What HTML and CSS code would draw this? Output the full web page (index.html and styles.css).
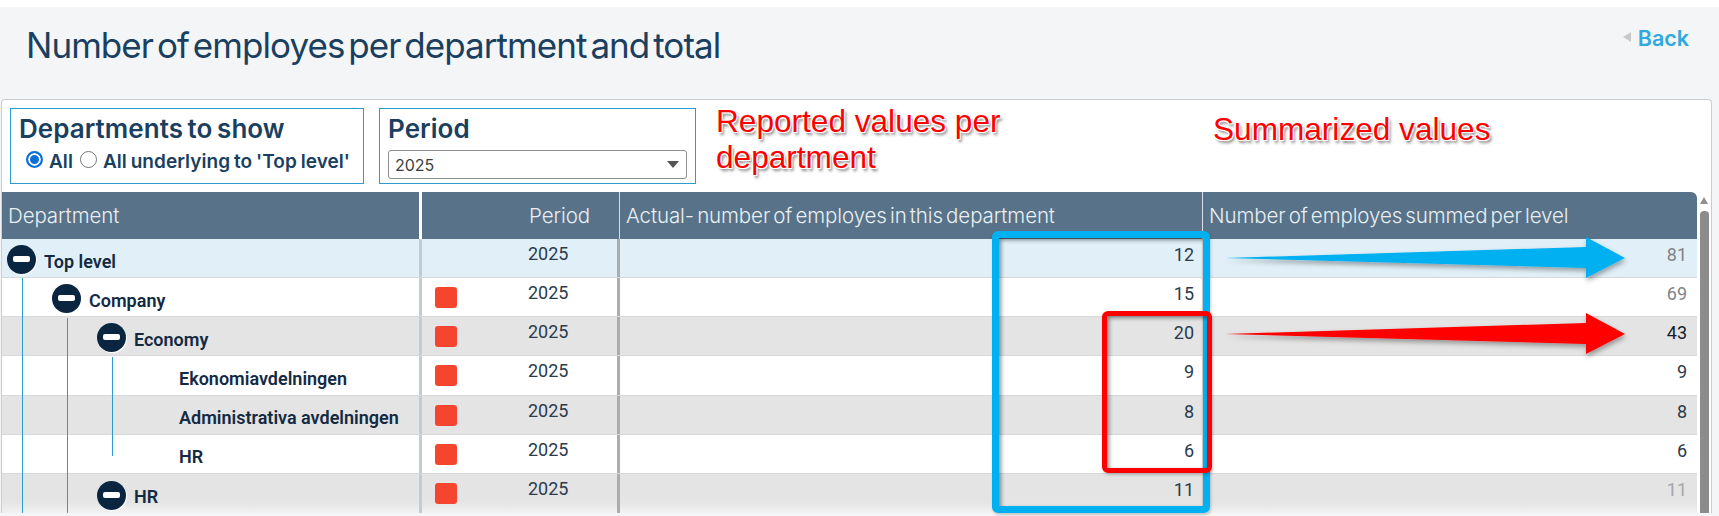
FILE: index.html
```html
<!DOCTYPE html>
<html lang="en">
<head>
<meta charset="utf-8">
<title>Number of employes per department and total</title>
<link rel="stylesheet" href="styles.css">
</head>
<body>
<div class="page">
  <header class="topbar">
    <h1 class="title">Number of employes per department and total</h1>
    <a class="back"><span class="back-arrow"></span>Back</a>
  </header>
  <main class="panel">
    <div class="filters">
      <section class="filter filter-dept">
        <h2 class="filter-title">Departments to show</h2>
        <div class="radios">
          <span class="radio radio-on"></span><span class="radio-label">All</span>
          <span class="radio"></span><span class="radio-label">All underlying to 'Top level'</span>
        </div>
      </section>
      <section class="filter filter-period">
        <h2 class="filter-title">Period</h2>
        <div class="select"><span>2025</span><span class="select-arrow"></span></div>
      </section>
    </div>
    <div class="table-wrap">
      <div class="table">
        <div class="row head">
          <div class="c c1">Department</div>
          <div class="c c2 head-period">Period</div>
          <div class="c c3">Actual- number of employes in this department</div>
          <div class="c c4">Number of employes summed per level</div>
        </div>
        <div class="row selected">
          <div class="c c1 l0"><span class="toggle"></span><span class="name">Top level</span></div>
          <div class="c c2"><span class="year">2025</span></div>
          <div class="c c3 num">12</div>
          <div class="c c4 num muted">81</div>
        </div>
        <div class="row">
          <div class="c c1 l1"><span class="toggle"></span><span class="name">Company</span></div>
          <div class="c c2"><span class="flag"></span><span class="year">2025</span></div>
          <div class="c c3 num">15</div>
          <div class="c c4 num muted">69</div>
        </div>
        <div class="row alt">
          <div class="c c1 l2"><span class="toggle"></span><span class="name">Economy</span></div>
          <div class="c c2"><span class="flag"></span><span class="year">2025</span></div>
          <div class="c c3 num">20</div>
          <div class="c c4 num strong">43</div>
        </div>
        <div class="row">
          <div class="c c1 l3"><span class="name">Ekonomiavdelningen</span></div>
          <div class="c c2"><span class="flag"></span><span class="year">2025</span></div>
          <div class="c c3 num">9</div>
          <div class="c c4 num">9</div>
        </div>
        <div class="row alt">
          <div class="c c1 l3"><span class="name">Administrativa avdelningen</span></div>
          <div class="c c2"><span class="flag"></span><span class="year">2025</span></div>
          <div class="c c3 num">8</div>
          <div class="c c4 num">8</div>
        </div>
        <div class="row">
          <div class="c c1 l3"><span class="name">HR</span></div>
          <div class="c c2"><span class="flag"></span><span class="year">2025</span></div>
          <div class="c c3 num">6</div>
          <div class="c c4 num">6</div>
        </div>
        <div class="row alt last">
          <div class="c c1 l2"><span class="toggle"></span><span class="name">HR</span></div>
          <div class="c c2"><span class="flag"></span><span class="year">2025</span></div>
          <div class="c c3 num">11</div>
          <div class="c c4 num faint">11</div>
        </div>
        <span class="guide g0"></span>
        <span class="guide g1"></span>
        <span class="guide g2"></span>
      </div>
      <div class="scrollbar"><span class="scroll-up"></span><span class="scroll-thumb"></span></div>
    </div>
  </main>

  <div class="note note-reported">Reported values per<br>department</div>
  <div class="note note-summed">Summarized values</div>
  <div class="box box-blue"></div>
  <div class="box box-red"></div>
  <svg class="arrows" width="1719" height="516" viewBox="0 0 1719 516" aria-hidden="true">
    <defs>
      <filter id="sh" x="-5%" y="-30%" width="110%" height="170%">
        <feDropShadow dx="1" dy="3" stdDeviation="2.5" flood-color="#000" flood-opacity=".35"/>
      </filter>
    </defs>
    <path class="arrow-blue" filter="url(#sh)" d="M1225 258 L1586 247 L1586 237 L1625 258 L1586 278 L1586 268 Z"/>
    <path class="arrow-red" filter="url(#sh)" d="M1225 334 L1586 323 L1586 313 L1625 334 L1586 354 L1586 344 Z"/>
  </svg>
</div>
</body>
</html>
```
FILE: styles.css
```css
* { box-sizing: border-box; }
html, body { margin: 0; padding: 0; }
body { width: 1719px; height: 516px; overflow: hidden; background: #fff; font-family: "Inter", "Liberation Sans", sans-serif; }
.page { position: relative; margin-top: 7px; height: 509px; background: #f4f5f7; }

.topbar { height: 92px; display: flex; justify-content: space-between; align-items: flex-start; padding: 0 30px 0 26px; }
.title { margin: 16px 0 0; font-size: 35px; line-height: 44px; font-weight: 400; letter-spacing: -.95px; word-spacing: -5px; color: #1a3f5f; white-space: nowrap; }
.back { display: flex; align-items: center; margin-top: 18px; font-size: 21.5px; line-height: 26px; font-weight: 600; color: #2fa9e0; }
.back-arrow { width: 0; height: 0; margin-right: 7px; border-style: solid; border-width: 5.5px 8px 5.5px 0; border-color: transparent #c6c8ca transparent transparent; transform: translateY(-1px); }

.panel { margin-left: 1px; width: 1711px; height: 414px; background: #fff; border: 1px solid #cbcdd0; border-bottom: 0; border-radius: 4px 4px 0 0; overflow: hidden; }
.filters { display: flex; gap: 15px; padding: 8px 0 0 8px; height: 92px; }
.filter { height: 76px; border: 1px solid #2b9bd0; padding: 0 8px; color: #1a3f5f; }
.filter-dept { width: 354px; }
.filter-period { width: 317px; }
.filter-title { margin: 3px 0 0; font-size: 26px; line-height: 34px; font-weight: 600; letter-spacing: .05px; word-spacing: -2px; white-space: nowrap; }
.radios { display: flex; align-items: center; margin-top: 3px; padding-left: 7px; font-size: 19px; font-weight: 600; letter-spacing: .05px; word-spacing: -1px; white-space: nowrap; height: 24px; }
.radio { flex: none; width: 17px; height: 17px; border: 1px solid #767676; border-radius: 50%; background: #fff; margin-right: 6px; transform: translateY(-2px); }
.radio-on { border: 2px solid #0b6fd6; box-shadow: inset 0 0 0 2px #fff; background: #0b6fd6; }
.radio-label { margin-right: 7px; }
.select { display: flex; justify-content: space-between; align-items: center; margin-top: 4px; height: 29px; padding: 0 7px 0 6px; border: 1px solid #8e8e8e; border-radius: 3px; background: #fff; font-size: 16px; color: #3a3f44; }
.select-arrow { width: 0; height: 0; border-style: solid; border-width: 7px 6px 0 6px; border-color: #555 transparent transparent transparent; }

.table-wrap { display: flex; }
.table { position: relative; width: 1695px; }
.row { display: flex; height: 39.17px; border-bottom: 1px solid #d6d8da; background: #fff; color: #132a42; font-family: "Roboto", "Liberation Sans", sans-serif; }
.row.selected { background: #e1f0f8; }
.row.alt { background: #e4e4e4; }
.row.last { background: linear-gradient(#e4e4e4 72%, #f2f2f2); border-bottom: 0; }
.row.head { height: 47px; background: #587389; border-bottom: 0; border-radius: 0 6px 0 0; color: #e9eff3; font-family: "Inter", "Liberation Sans", sans-serif; font-size: 20.5px; font-weight: 300; letter-spacing: -.1px; word-spacing: -2.5px; }
.head .c { align-items: center; padding-left: 6px; padding-bottom: 1px; white-space: nowrap; }
.head .head-period { justify-content: flex-end; padding-right: 29px; }
.c { display: flex; min-width: 0; }
.c1 { width: 420px; border-right: 3px solid #c4ccd3; }
.c2 { width: 198px; position: relative; border-right: 3px solid #a9adb0; }
.c3 { width: 583px; border-right: 1px solid #d0d4d8; }
.c4 { width: 494px; }
.head .c1 { border-right-color: #fff; }
.head .c2 { border-right: 1px solid #d6dde3; }
.head .c3 { border-right: 1px solid #d6dde3; }

.l0, .l1, .l2, .l3 { align-items: center; font-size: 18px; font-weight: 600; }
.l0 { padding-left: 5px; }
.l1 { padding-left: 50px; }
.l2 { padding-left: 95px; }
.l3 { padding-left: 177px; }
.name { padding-top: 6px; white-space: nowrap; }
.toggle { position: relative; flex: none; width: 29px; height: 29px; margin: 3px 8px 0 0; border-radius: 50%; background: #0a2540; box-shadow: 1px 1px 0 #fff; }
.toggle::after { content: ""; position: absolute; left: 6px; top: 11px; width: 17px; height: 6px; border-radius: 2px; background: #fff; }
.flag { position: absolute; left: 13px; top: 9px; width: 22px; height: 21px; border-radius: 3px; background: #f5452f; }
.year { position: absolute; left: 106px; top: 4px; font-size: 18px; line-height: 22px; color: #2a3b4d; }
.num { justify-content: flex-end; align-items: flex-start; padding: 5px 8px 0 0; font-size: 18px; line-height: 22px; color: #2a3b4d; }
.c4.num { padding-right: 10px; }
.muted { color: #808487; }
.strong { color: #14202c; }
.faint { color: #a3a6a8; }

.guide { position: absolute; width: 1px; background: #2b9bd0; }
.g0 { left: 20px; top: 86px; bottom: 0; }
.g1 { left: 65px; top: 126px; bottom: 0; }
.g2 { left: 110px; top: 165px; height: 99px; }

.scrollbar { position: relative; width: 15px; }
.scroll-up { position: absolute; left: 3px; top: 5px; width: 0; height: 0; border-style: solid; border-width: 0 4.5px 7px 4.5px; border-color: transparent transparent #8f8f8f transparent; }
.scroll-thumb { position: absolute; left: 3px; top: 19px; width: 9px; height: 302px; border-radius: 4px 4px 0 0; background: #8c8c8c; }

.note { position: absolute; color: #f00; font-family: "Liberation Sans", Arial, sans-serif; font-size: 31.6px; line-height: 36px; white-space: nowrap; text-shadow: 1px 1px 0 #fff, -1px -1px 0 #fff, 1px -1px 0 #fff, -1px 1px 0 #fff, 2px 3px 3px rgba(0,0,0,.5); }
.note-reported { left: 716px; top: 96px; }
.note-summed { left: 1213px; top: 104px; }
.box { position: absolute; box-shadow: inset 2px 2px 4px rgba(0,0,0,.45), 1px 2px 3px rgba(0,0,0,.2); }
.box-blue { left: 992px; top: 224px; width: 218px; height: 282px; border: 7px solid #00b0f0; border-radius: 6px; }
.box-red { left: 1102px; top: 304px; width: 110px; height: 162px; border: 5px solid #f00; border-radius: 6px; }
.arrows { position: absolute; left: 0; top: -7px; pointer-events: none; }
.arrow-blue { fill: #00b0f0; }
.arrow-red { fill: #f00; }
```
